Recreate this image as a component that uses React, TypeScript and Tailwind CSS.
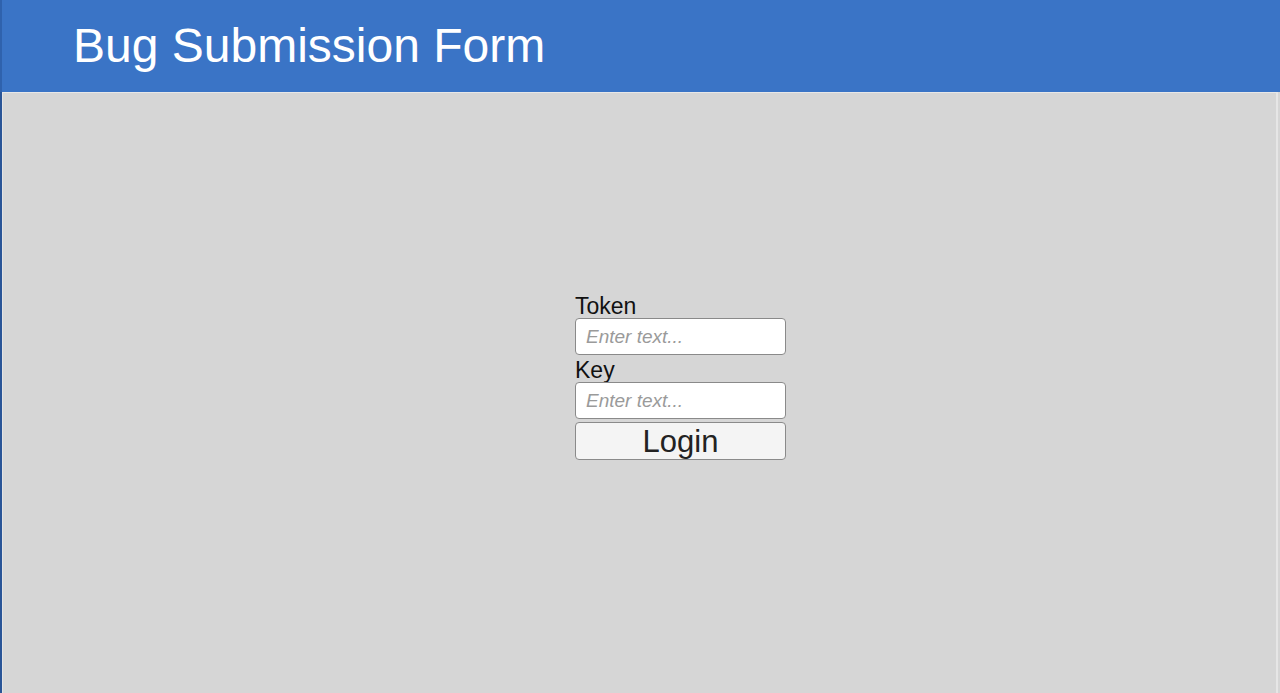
export default function App() {
  return (
    <div className="flex h-[693px] w-[1280px] flex-col overflow-hidden bg-[#d6d6d6] font-['Liberation_Sans',Arial,sans-serif]">
      <header className="h-[92px] shrink-0 border-l-2 border-[#2f62ad] bg-[#3a74c6] pl-[71px] pt-[22px]">
        <h1 className="text-[48px] leading-none text-white">Bug Submission Form</h1>
      </header>

      <main className="flex-1 border-l-2 border-[#2a5597]">
        <div className="mr-[2px] h-full border-t border-r-2 border-l border-t-[#e8e8e8] border-r-[#e6e6e6] border-l-[#e4e4e4] pt-[201px] pl-[572px]">
          <form className="flex w-[211px] flex-col" onSubmit={(e) => e.preventDefault()}>
            <label className="h-6 text-[23px] leading-6 text-[#111]">Token</label>
            <input
              type="text"
              placeholder="Enter text..."
              className="h-[37px] rounded-[4px] border border-[#8a8a8a] bg-white px-[10px] text-[19px] text-[#222] outline-none placeholder:italic placeholder:text-[#9a9a9a]"
            />
            <label className="mt-[3px] h-6 text-[23px] leading-6 text-[#111]">Key</label>
            <input
              type="text"
              placeholder="Enter text..."
              className="h-[37px] rounded-[4px] border border-[#8a8a8a] bg-white px-[10px] text-[19px] text-[#222] outline-none placeholder:italic placeholder:text-[#9a9a9a]"
            />
            <button
              type="submit"
              className="mt-[3px] h-[38px] rounded-[4px] border border-[#8a8a8a] bg-[#f4f4f4] text-[31px] leading-none text-[#222]"
            >
              Login
            </button>
          </form>
        </div>
      </main>
    </div>
  );
}
